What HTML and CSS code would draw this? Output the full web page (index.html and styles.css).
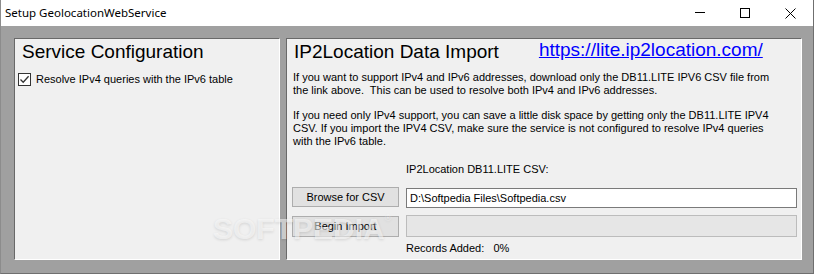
FILE: index.html
```html
<!DOCTYPE html>
<html lang="en">
<head>
    <meta charset="UTF-8">
    <title>Setup GeolocationWebService</title>
    <link rel="stylesheet" href="styles.css">
</head>
<body>
    <div class="window">
        <div class="titlebar">
            <span class="title">Setup GeolocationWebService</span>
            <div class="caption-buttons">
                <span class="cap-btn">
                    <svg width="10" height="10" viewBox="0 0 10 10"><path d="M0 4.5H10" stroke="#000" stroke-width="1"/></svg>
                </span>
                <span class="cap-btn">
                    <svg width="10" height="10" viewBox="0 0 10 10"><rect x="0.5" y="0.5" width="9" height="9" fill="none" stroke="#000" stroke-width="1"/></svg>
                </span>
                <span class="cap-btn">
                    <svg width="11" height="11" viewBox="0 0 11 11"><path d="M0.5 0.5L10.5 10.5M10.5 0.5L0.5 10.5" stroke="#000" stroke-width="1"/></svg>
                </span>
            </div>
        </div>

        <div class="client">
            <div class="panel config-panel">
                <h2 class="panel-title">Service Configuration</h2>
                <label class="check-row">
                    <span class="checkbox">
                        <svg width="11" height="11" viewBox="0 0 11 11"><path d="M1.5 5.5L4.2 8.3L9.6 2.2" fill="none" stroke="#333" stroke-width="1.3"/></svg>
                    </span>
                    Resolve IPv4 queries with the IPv6 table
                </label>
            </div>

            <div class="panel import-panel">
                <div class="import-head">
                    <h2 class="panel-title">IP2Location Data Import</h2>
                    <a class="site-link" href="#">https://lite.ip2location.com/</a>
                </div>
                <p class="note first">If you want to support IPv4 and IPv6 addresses, download only the DB11.LITE IPV6 CSV file from<br>the link above.&nbsp; This can be used to resolve both IPv4 and IPv6 addresses.</p>
                <p class="note">If you need only IPv4 support, you can save a little disk space by getting only the DB11.LITE IPV4<br>CSV. If you import the IPV4 CSV, make sure the service is not configured to resolve IPv4 queries<br>with the IPv6 table.</p>

                <div class="import-grid">
                    <span></span>
                    <span class="field-label">IP2Location DB11.LITE CSV:</span>

                    <button class="win-btn">Browse for CSV</button>
                    <div class="textbox">D:\Softpedia Files\Softpedia.csv</div>

                    <button class="win-btn import-btn">Begin Import</button>
                    <div class="progress"></div>

                    <span></span>
                    <span class="records">Records Added:&nbsp;&nbsp; 0%</span>
                </div>
            </div>
        </div>

        <div class="watermark">SOFTPEDIA<sup>®</sup></div>
    </div>
</body>
</html>
```

FILE: styles.css
```css
body {
    margin: 0;
    padding: 0;
    font-family: 'Liberation Sans', Arial, sans-serif;
    font-size: 11px;
    color: #000;
}

.window {
    position: relative;
    width: 814px;
    height: 274px;
    box-sizing: border-box;
    background: #a0a0a0;
    border-left: 1px solid #8c8c8c;
    border-right: 1px solid #6f6f6f;
    border-bottom: 1px solid #6f6f6f;
    overflow: hidden;
}

.titlebar {
    height: 26px;
    background: #fff;
    display: flex;
    align-items: center;
    justify-content: space-between;
}

.title {
    font-family: 'Noto Sans', sans-serif;
    font-size: 11.5px;
    padding-left: 4px;
    padding-bottom: 1px;
}

.caption-buttons {
    display: flex;
    height: 26px;
}

.cap-btn {
    width: 45px;
    display: flex;
    align-items: center;
    justify-content: center;
}

.cap-btn:last-child {
    width: 46px;
}

.client {
    display: flex;
    gap: 6px;
    padding: 12px 0 0 13px;
}

.panel {
    height: 222px;
    box-sizing: border-box;
    background: #f0f0f0;
    border-top: 1px solid #696969;
    border-left: 1px solid #696969;
    border-right: 1px solid #fff;
    border-bottom: 1px solid #fff;
}

.config-panel {
    width: 266px;
    padding: 2px 0 0 3px;
}

.import-panel {
    width: 516px;
    padding: 2px 4px 0 5px;
}

.panel-title {
    margin: 0;
    font-size: 19px;
    font-weight: normal;
    line-height: 22px;
}

.config-panel .panel-title {
    padding-left: 4px;
}

.check-row {
    display: flex;
    align-items: center;
    gap: 5px;
    margin-top: 10px;
    line-height: 13px;
}

.checkbox {
    width: 13px;
    height: 13px;
    box-sizing: border-box;
    border: 1px solid #333;
    background: #fff;
    display: flex;
    align-items: center;
    justify-content: center;
}

.import-head {
    display: flex;
    gap: 40px;
    padding-left: 2px;
}

.site-link {
    color: #0000ff;
    font-size: 19px;
    line-height: 22px;
    margin-top: -2px;
}

.note {
    margin: 12px 0 0 1px;
    line-height: 13px;
}

.note.first {
    margin-top: 8px;
}

.import-grid {
    display: grid;
    grid-template-columns: 107px 1fr;
    column-gap: 7px;
    margin-top: 15px;
}

.field-label {
    line-height: 13px;
    padding-bottom: 11px;
}

.win-btn {
    height: 20px;
    margin: 0;
    padding: 0;
    font-family: 'Liberation Sans', Arial, sans-serif;
    font-size: 11px;
    color: #000;
    background: #e1e1e1;
    border: 1px solid #adadad;
}

.textbox {
    height: 20px;
    margin-top: 1px;
    box-sizing: border-box;
    background: #fff;
    border: 1px solid #7a7a7a;
    padding: 3px 0 0 3px;
    line-height: 13px;
}

.import-btn {
    height: 21px;
    margin-top: 7px;
    align-self: center;
}

.progress {
    height: 22px;
    margin-top: 7px;
    box-sizing: border-box;
    background: #e6e6e6;
    border: 1px solid #bcbcbc;
}

.records {
    margin-top: 5px;
    line-height: 13px;
}

.watermark {
    position: absolute;
    left: 212px;
    top: 212px;
    font-family: 'Liberation Sans', Arial, sans-serif;
    font-weight: bold;
    font-size: 30px;
    color: rgba(255, 255, 255, 0.55);
    text-shadow: 0 1px 3px rgba(0, 0, 0, 0.12);
    pointer-events: none;
}

.watermark sup {
    font-size: 9px;
    font-weight: normal;
    vertical-align: 18px;
}
```
